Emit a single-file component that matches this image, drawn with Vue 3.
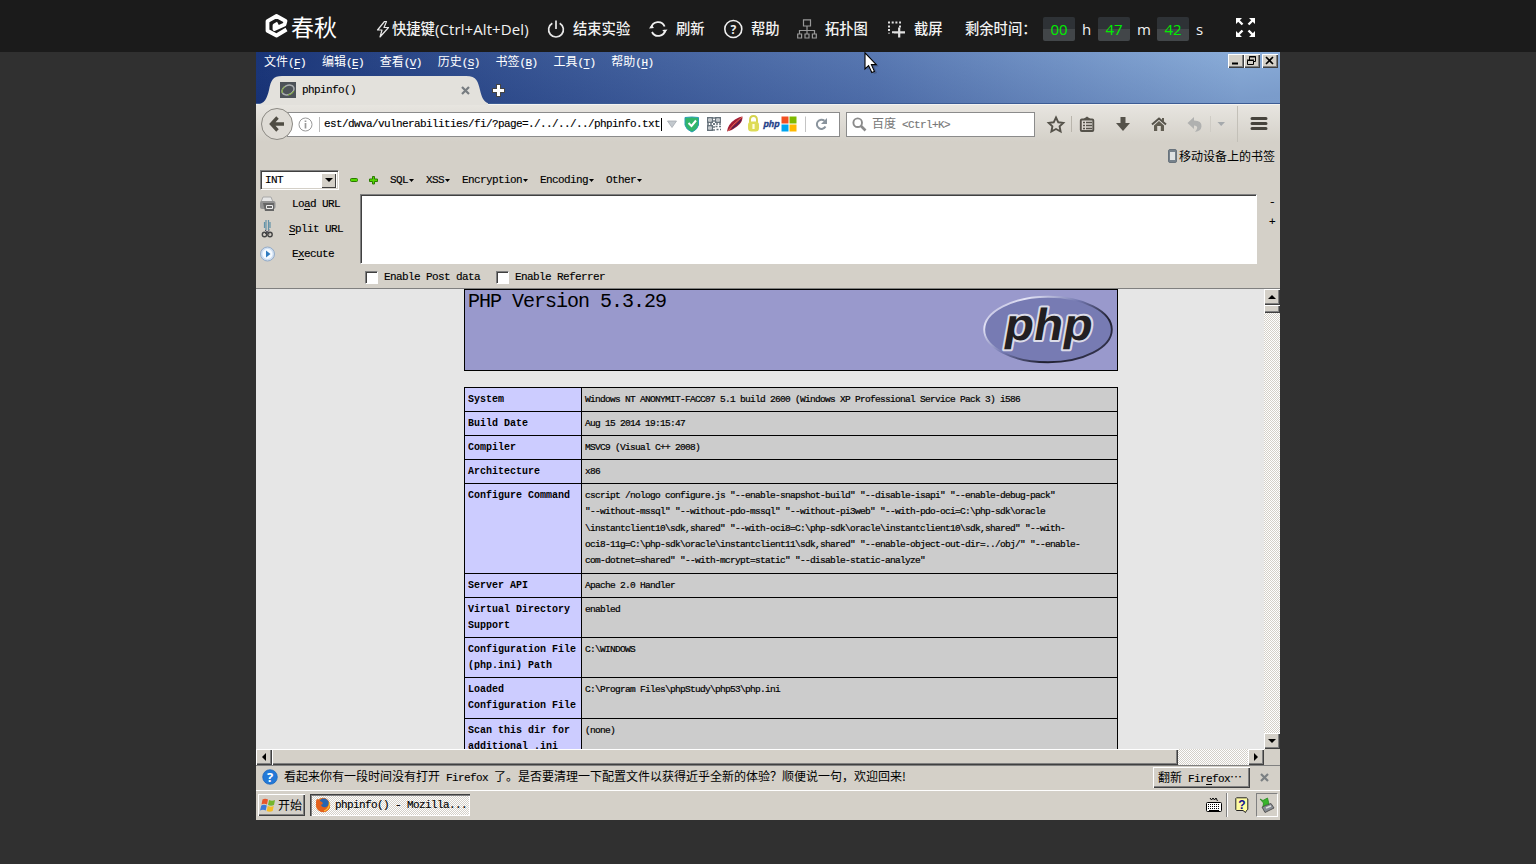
<script setup>
const menus = [
  ['文件', 'F'], ['编辑', 'E'], ['查看', 'V'], ['历史', 'S'],
  ['书签', 'B'], ['工具', 'T'], ['帮助', 'H'],
]
const rows = [
  { k: ['System'], v: ['Windows NT ANONYMIT-FACC07 5.1 build 2600 (Windows XP Professional Service Pack 3) i586'] },
  { k: ['Build Date'], v: ['Aug 15 2014 19:15:47'] },
  { k: ['Compiler'], v: ['MSVC9 (Visual C++ 2008)'] },
  { k: ['Architecture'], v: ['x86'] },
  {
    k: ['Configure Command'],
    v: [
      'cscript /nologo configure.js "--enable-snapshot-build" "--disable-isapi" "--enable-debug-pack"',
      '"--without-mssql" "--without-pdo-mssql" "--without-pi3web" "--with-pdo-oci=C:\\php-sdk\\oracle',
      '\\instantclient10\\sdk,shared" "--with-oci8=C:\\php-sdk\\oracle\\instantclient10\\sdk,shared" "--with-',
      'oci8-11g=C:\\php-sdk\\oracle\\instantclient11\\sdk,shared" "--enable-object-out-dir=../obj/" "--enable-',
      'com-dotnet=shared" "--with-mcrypt=static" "--disable-static-analyze"',
    ],
  },
  { k: ['Server API'], v: ['Apache 2.0 Handler'] },
  { k: ['Virtual Directory', 'Support'], v: ['enabled'] },
  { k: ['Configuration File', '(php.ini) Path'], v: ['C:\\WINDOWS'] },
  { k: ['Loaded', 'Configuration File'], v: ['C:\\Program Files\\phpStudy\\php53\\php.ini'] },
  { k: ['Scan this dir for', 'additional .ini'], v: ['(none)'] },
]
const hackMenus = ['SQL', 'XSS', 'Encryption', 'Encoding', 'Other']
</script>

<template>
  <div class="screen">
    <header class="topbar">
      <div class="logo">
        <svg width="24" height="26" viewBox="0 0 24 26" fill="none" stroke="#fff" stroke-width="3.800" stroke-linejoin="round">
          <path d="M22.500 16.500 L12.500 22.500 L3.500 17.800 V8.200 L12.500 3 L21.500 8 L20.500 11.500 L10.500 16 L10.500 12.500 L14 10.500" />
        </svg>
        <span>春秋</span>
      </div>
      <div class="tool t16">
        <svg width="16" height="20" viewBox="0 0 16 20" fill="none" stroke="#e8e8e8" stroke-width="1.2" stroke-linejoin="round"><path d="M8.500 2.500 L1.500 11 H6 L4 18 L12.500 8.500 H8 L10.500 2.500 Z" /></svg>
        <span>快捷键</span><span class="keys">(Ctrl+Alt+Del)</span>
      </div>
      <div class="tool t26">
        <svg width="18" height="20" viewBox="0 0 18 20" fill="none" stroke="#e8e8e8" stroke-width="1.7"><path d="M5.300 4.200 A7.400 7.400 0 1 0 12.700 4.200 M9 1.500 V10" /></svg>
        <span>结束实验</span>
      </div>
      <div class="tool t26">
        <svg width="19" height="20" viewBox="0 0 19 20" fill="none" stroke="#f0f0f0" stroke-width="1.8"><path d="M2.200 9 A7 7 0 0 1 15.600 7.500 M16.200 11 A7 7 0 0 1 3 13" /><path d="M0 9.500 L2.600 5.800 L5 9 Z M13.200 11 L18.500 10.500 L16 14 Z" fill="#f0f0f0" stroke="none" /></svg>
        <span>刷新</span>
      </div>
      <div class="tool t27">
        <svg width="19" height="20" viewBox="0 0 19 20"><circle cx="9.300" cy="10" r="8.500" fill="none" stroke="#f0f0f0" stroke-width="1.6" /><text x="9.300" y="14.500" text-anchor="middle" font-family="Noto Sans" font-weight="bold" font-size="12" fill="#f0f0f0">?</text></svg>
        <span>帮助</span>
      </div>
      <div class="tool t28">
        <svg width="20" height="20" viewBox="0 0 20 20" fill="none" stroke="#999" stroke-width="1.2"><path d="M6.500 .8 H13.500 V7 H6.500 Z M10 7 V15 M2.500 15 V11.500 H17.500 V15 M.7 15 H4.600 V19 H.7 Z M8 15 H12 V19 H8 Z M15.400 15 H19.300 V19 H15.400 Z" /></svg>
        <span>拓扑图</span>
      </div>
      <div class="tool t26">
        <svg width="18" height="20" viewBox="0 0 18 20" fill="none" stroke="#e0e0e0" stroke-width="2"><path d="M0 3.500 H13" stroke-dasharray="2 1.700" /><path d="M1 6.400 V14.500" stroke-dasharray="2 1.700" /><path d="M12 6.400 V8.400 M4 13.300 H6" /><path d="M11.200 8.500 V18.500 M6 13.300 H17" stroke-width="2.200" /></svg>
        <span>截屏</span>
      </div>
      <div class="tool">剩余时间：</div>
      <div class="time"><b>00</b><i>h</i></div>
      <div class="time"><b>47</b><i>m</i></div>
      <div class="time"><b>42</b><i>s</i></div>
      <svg class="full" width="20" height="20" viewBox="0 0 20 20" fill="#fff" stroke="#fff"><path d="M2 2 L6.500 6.500 M17 2 L12.500 6.500 M2 17 L6.500 12.500 M17 17 L12.500 12.500" stroke-width="2.400" /><path stroke="none" d="M0 0 H6 L0 6 Z M19 0 V6 L13 0 Z M0 19 V13 L6 19 Z M19 19 H13 L19 13 Z" /></svg>
    </header>

    <main class="desktop">
      <div class="title">
        <div class="menubar">
          <span v-for="m in menus" :key="m[1]" class="menu">{{ m[0] }}<span class="l">(<u>{{ m[1] }}</u>)</span></span>
          <div class="winbtns">
            <svg class="btn3" viewBox="0 0 16 14"><path d="M4 9.500 H10" stroke="#000" stroke-width="2" /></svg>
            <svg class="btn3" viewBox="0 0 16 14"><path d="M5.500 6 V2.500 H11.500 V7.500 H9.500 M5 3 H12 M3.500 6.500 H9.500 V10.500 H3.500 Z M3 6 H10" stroke="#000" fill="none" /></svg>
            <svg class="btn3 gap" viewBox="0 0 16 14"><path d="M4 3 L11 10 M11 3 L4 10" stroke="#000" stroke-width="1.6" /></svg>
          </div>
        </div>
        <div class="tabs">
          <div class="tab">
            <svg class="tabshape" width="232" height="29" viewBox="0 0 232 29"><path d="M0 29 C9 28 11 22 13 14 C15 4 17 0 26 0 H210 C221 0 222 6 224 14 C226 23 229 28 236 28 V29 Z" fill="#e3e1dc" /></svg>
            <svg class="fav" width="16" height="16" viewBox="0 0 16 16"><rect width="16" height="16" fill="#4d5258" /><ellipse cx="8" cy="8" rx="6.300" ry="4.500" fill="none" stroke="#a9adaf" stroke-width="1.5" transform="rotate(-25 8 8)" /><path d="M2 11 Q1.500 6 5 4.500 M8 13 Q12 12.500 14 9" stroke="#7fae2e" fill="none" /></svg>
            <span class="l tabname">phpinfo()</span>
            <svg class="tabx" width="9" height="9" viewBox="0 0 9 9"><path d="M1 1 L8 8 M8 1 L1 8" stroke="#777c80" stroke-width="2.2" /></svg>
          </div>
          <svg class="plus" width="13" height="13" viewBox="0 0 13 13"><path d="M6.500 0 V13 M0 6.500 H13" stroke="#454545" stroke-width="5" /><path d="M6.500 1 V12 M1 6.500 H12" stroke="#fff" stroke-width="3" /></svg>
        </div>
      </div>

      <div class="nav">
        <div class="back"><svg width="16" height="16" viewBox="0 0 16 16"><path d="M8.500 1.500 L2.500 8 L8.500 14.500 M3 8 H15" fill="none" stroke="#4f4c43" stroke-width="3.400" /></svg></div>
        <div class="url">
          <svg class="info" width="15" height="15" viewBox="0 0 15 15" fill="none" stroke="#999"><circle cx="7.500" cy="7.500" r="6.500" /><path d="M7.500 6 V11.500 M7.500 3.500 V5" stroke-width="1.700" /></svg>
          <i class="vl"></i>
          <span class="l addr">est/dwva/vulnerabilities/fi/?page=./../../../phpinfo.txt</span><i class="caret"></i>
          <svg class="urlicons" width="170" height="20" viewBox="0 0 170 20">
            <path d="M5.500 7 H14.500 L10 13.500 Z" fill="#c3c9ce" stroke="#a6abb1" stroke-width=".8" />
            <path d="M23 3.500 Q30 2.500 36.500 3.500 V11 Q35.500 15.500 30 18 Q24 15.500 23 11 Z" fill="#31b56a" stroke="#2a9eb4" /><path d="M26.500 9 L29.500 12 L34 6.500" stroke="#fff" stroke-width="2" fill="none" />
            <g fill="none" stroke="#66727b" stroke-width="1.400"><path d="M45.700 3.700 H50.300 V8.300 H45.700 Z M53.700 3.700 H58.300 V8.300 H53.700 Z M45.700 11.700 H50.300 V16.300 H45.700 Z M47.500 6 H48.500 M55.500 6 H56.500 M47.500 14 H48.500" /><path d="M52 3 V17 M45 10 H59" stroke-dasharray="2 1" /><path d="M53.500 12.500 H59 M54.500 15.500 H59" stroke-dasharray="2 1.500" /></g>
            <path d="M65 17.500 Q66 10 73 5.500 Q78 2.500 80.500 2.500 Q81 8 75 12.500 Q71 16 65 17.500" fill="#a21d36" /><path d="M66 17 Q71 10 80 3" stroke="#e06a54" fill="none" /><path d="M70 14.500 Q75 11 79 6" stroke="#51204f" stroke-width="1.500" fill="none" />
            <path d="M88 9 V6 Q88 2 91.500 2 Q95 2 95 6 V9" fill="none" stroke="#d5d34d" stroke-width="1.900" /><rect x="86" y="7.500" width="11" height="10" rx="3.500" fill="#dedc57" /><path d="M91.500 10 V15" stroke="#fffde0" stroke-width="2.200" />
            <text transform="translate(101 13) skewX(-12)" font-family="Liberation Sans" font-size="9.500" font-weight="700" fill="#1d3d87" stroke="#1d3d87" stroke-width=".4" textLength="16" lengthAdjust="spacingAndGlyphs">php</text>
            <path d="M119.500 2.500 H126.500 V9.500 H119.500Z" fill="#f25022" /><path d="M127.500 2.500 H134.500 V9.500 H127.500Z" fill="#7fba00" /><path d="M119.500 10.500 H126.500 V17.500 H119.500Z" fill="#00a4ef" /><path d="M127.500 10.500 H134.500 V17.500 H127.500Z" fill="#ffb900" />
            <path d="M143.500 2.500 V18" stroke="#c4c4c4" /><path d="M163.500 12.500 A4.600 4.600 0 1 1 162.500 6.800" fill="none" stroke="#8a949d" stroke-width="2" /><path d="M165 4 V10 H159 Z" fill="#8a949d" />
          </svg>
        </div>
        <div class="search">
          <svg width="15" height="15" viewBox="0 0 15 15" fill="none" stroke="#8b8b8b"><circle cx="5.700" cy="5.700" r="4.300" stroke-width="1.900" /><path d="M9 9 L13.500 13.500" stroke-width="2.600" /></svg>
          <span>百度<span class="l"> &lt;Ctrl+K&gt;</span></span>
        </div>
        <svg class="navicons" width="240" height="36" viewBox="0 0 240 36">
          <path d="M16 11.500 L18.300 16.300 L23.300 16.900 L19.600 20.400 L20.600 25.500 L16 23 L11.400 25.500 L12.400 20.400 L8.700 16.900 L13.700 16.300 Z" fill="none" stroke="#55524a" stroke-width="1.900" />
          <path d="M31.500 10 V26" stroke="#b9b5ac" />
          <rect x="40.800" y="13.500" width="12.500" height="11.500" rx="1" fill="none" stroke="#55524a" stroke-width="1.900" /><path d="M43.500 13 L47 10.500 L50.500 13Z" fill="#55524a" /><path d="M43 16.500 H45 M46 16.500 H52 M43 19.500 H45 M46 19.500 H52 M43 22.500 H45 M46 22.500 H52" stroke="#55524a" stroke-width="1.400" fill="none" />
          <path d="M80.500 11 H85.500 V17 H90 L83 25 L76 17 H80.500 Z" fill="#55524a" />
          <path d="M112 18.500 L119 12.500 L126 18.500" fill="none" stroke="#55524a" stroke-width="2" /><path d="M114 19.500 L119 15 L124 19.500 V25 H120.800 V20 H117.200 V25 H114 Z M122 12 H124 V16.500 L122 15Z" fill="#615d52" />
          <path d="M147.500 17 L154 11 V14.500 Q162 14.500 161.500 20.500 Q161 25 155 26 Q160 20 154 19.500 V23 Z" fill="#b0b1b0" />
          <path d="M170.500 10 V26" stroke="#cfccc5" /><path d="M177.500 16 H185 L181.200 20 Z" fill="#a5a9ac" />
          <path d="M197.500 0 V36" stroke="#c3c0b8" /><path d="M212 12.500 H226 M212 17.500 H226 M212 22.500 H226" stroke="#46433c" stroke-width="3" stroke-linecap="round" />
        </svg>
      </div>

      <div class="bookmarks">
        <svg width="9" height="14" viewBox="0 0 9 14"><rect x=".5" y=".5" width="8" height="13" rx="1.500" fill="#77828c" stroke="#69737c" /><path d="M2 3 H7 V11 H2Z" fill="#dfe2e3" /></svg>
        <span>移动设备上的书签</span>
      </div>

      <section class="hackbar">
        <div class="hackmenu">
          <div class="select l"><span>INT</span><i><svg width="8" height="4" viewBox="0 0 8 4"><path d="M0 0 H8 L4 4Z" /></svg></i></div>
          <svg width="30" height="10" viewBox="0 0 30 10" fill="#53d800" stroke="#2b7a00" stroke-width="1"><rect x="1.500" y="3.500" width="7" height="3" rx="1" /><path d="M23.500 1.500 H25.500 V4 H28.500 V6.500 H25.500 V9 H23.500 V6.500 H20.500 V4 H23.500Z" /></svg>
          <span v-for="m in hackMenus" :key="m" class="l hm">{{ m }}<svg width="5" height="3" viewBox="0 0 5 3"><path d="M0 0 H5 L2.500 3Z" /></svg></span>
        </div>
        <div class="hackbody">
          <div class="actions l">
            <div><svg width="16" height="16" viewBox="0 0 16 16"><path d="M3 1 H11 L13 6 H1 Z" fill="#e6e6e6" stroke="#a8a8a8" /><rect x="0" y="5" width="15.500" height="8" rx="2" fill="#929292" /><path d="M3 7 H14 V15 H5 Z" fill="#666" /><path d="M6.500 9.500 H12.500 V12.500 H6.500Z" fill="none" stroke="#eee" /></svg><span>Lo<u>a</u>d URL</span></div>
            <div><svg width="16" height="18" viewBox="0 0 16 18" fill="none"><path d="M6 0 V10 M8.500 0 V10 M4.500 2 V8 M10 2 V8" stroke="#6292a8" stroke-width="1.200" /><path d="M5 10 L9.500 14 M9.500 10 L5 14" stroke="#445" /><circle cx="4.500" cy="14.500" r="2.200" stroke="#444" stroke-width="1.400" /><circle cx="10" cy="14.500" r="2.200" stroke="#444" stroke-width="1.400" /></svg><span class="split"><u>S</u>plit URL</span></div>
            <div><svg width="16" height="16" viewBox="0 0 16 16"><circle cx="7.500" cy="8" r="7" fill="#cfdff2" stroke="#94abc7" /><circle cx="7.500" cy="8" r="5" fill="#f5faff" /><path d="M6 4.500 L10.500 8 L6 11.500Z" fill="#2f7bc0" /></svg><span>E<u>x</u>ecute</span></div>
          </div>
          <div class="textarea"></div>
          <div class="pm l"><span>-</span><span>+</span></div>
        </div>
        <div class="checks l"><i></i><span>Enable Post data</span><i></i><span>Enable Referrer</span></div>
      </section>

      <section class="viewport">
        <div class="page">
          <div class="phphead">
            <h1>PHP Version 5.3.29</h1>
            <svg width="132" height="72" viewBox="0 0 132 72">
              <defs>
                <linearGradient id="rim" x1="0" y1="0" x2="1" y2=".75"><stop offset="0" stop-color="#8c8cc0" /><stop offset=".22" stop-color="#e4e4f6" /><stop offset=".5" stop-color="#7378b0" /><stop offset=".78" stop-color="#202030" /><stop offset="1" stop-color="#34344f" /></linearGradient>
              </defs>
              <ellipse cx="66" cy="36.500" rx="63.800" ry="32.800" fill="#777bb3" stroke="url(#rim)" stroke-width="1.900" />
              <g transform="translate(20.500 46.500) skewX(-10)" font-family="Liberation Sans" font-weight="700" font-size="45" stroke-linejoin="round">
                <text textLength="88" lengthAdjust="spacingAndGlyphs" fill="#221f22" stroke="#dcdce8" stroke-width="4" paint-order="stroke">php</text>
              </g>
            </svg>
          </div>
          <div class="table">
            <div v-for="(r, i) in rows" :key="i" class="row">
              <div class="key"><div v-for="s in r.k" :key="s">{{ s }}</div></div>
              <div class="val"><div v-for="s in r.v" :key="s">{{ s }}</div></div>
            </div>
          </div>
        </div>
        <div class="vscroll">
          <div class="sb"><svg width="8" height="4" viewBox="0 0 8 4"><path d="M0 4 H8 L4 0Z" /></svg></div>
          <div class="sb thumb"></div>
          <div class="grow"></div>
          <div class="sb"><svg width="8" height="4" viewBox="0 0 8 4"><path d="M0 0 H8 L4 4Z" /></svg></div>
        </div>
      </section>
      <div class="hscroll">
        <div class="sb"><svg width="4" height="8" viewBox="0 0 4 8"><path d="M4 0 V8 L0 4Z" /></svg></div>
        <div class="sb hthumb"></div>
        <div class="grow"></div>
        <div class="sb"><svg width="4" height="8" viewBox="0 0 4 8"><path d="M0 0 V8 L4 4Z" /></svg></div>
        <div class="corner"></div>
      </div>

      <div class="notice">
        <svg width="16" height="16" viewBox="0 0 16 16"><circle cx="8" cy="8" r="7.300" fill="#2379d8" stroke="#1a63b8" stroke-width=".7" /><text x="8" y="12.500" text-anchor="middle" font-family="Open Sans" font-weight="bold" font-size="13" fill="#fff">?</text></svg>
        <span class="msg">看起来你有一段时间没有打开<span class="l"> Firefox </span>了。是否要清理一下配置文件以获得近乎全新的体验？顺便说一句，欢迎回来!</span>
        <div class="refresh">翻新<span class="l"> Fir<u>e</u>fox</span><span class="dots">⋯</span></div>
        <svg width="9" height="9" viewBox="0 0 9 9"><path d="M1 1 L8 8 M8 1 L1 8" stroke="#7b8083" stroke-width="2.200" /></svg>
      </div>

      <footer class="taskbar">
        <div class="start"><svg width="16" height="16" viewBox="0 0 16 16"><path d="M2.500 2.500 Q5 1 8 2.500 L7 7.500 Q4 6 1.500 7.500Z" fill="#e8562a" /><path d="M9 3 Q12 4.500 15 3 L14 8 Q11 9.500 8 8Z" fill="#74b52c" /><path d="M1.300 8.500 Q4 7 6.800 8.500 L5.700 13.500 Q3 12 0 13.500Z" fill="#3c78d8" /><path d="M7.700 9 Q11 10.500 13.700 9 L12.700 14 Q9.500 15.500 6.700 14Z" fill="#f5bc25" /></svg>开始</div>
        <div class="task"><svg width="16" height="16" viewBox="0 0 16 16"><circle cx="8" cy="8" r="7.200" fill="#e8701c" /><circle cx="8.800" cy="6.500" r="5" fill="#2765b0" /><path d="M1 5 Q1 2 3 2 Q4 4 7 5 Q9 7 6 8 Q7 11 11 10 Q14 9 14.500 5 Q17 13 9 15.300 Q1 15 1 5" fill="#e2601d" /><path d="M14.500 5 Q15 12 9 14" stroke="#fcc634" fill="none" stroke-width="1.200" /></svg><span class="l">phpinfo() - Mozilla...</span></div>
        <svg class="kbd" width="18" height="16" viewBox="0 0 18 16"><path d="M5 1 L6.500 3 L8 1 L9.500 3 L11 1 L12.500 4" stroke="#000" fill="none" /><rect x="1.500" y="5.500" width="15" height="9" rx="1" fill="#fff" stroke="#000" /><path d="M3 7.500 H15 M3 9.500 H15 M3 11.500 H15" stroke="#000" stroke-dasharray="1 1" /><path d="M4 13.500 H14" stroke="#000" /></svg>
        <i class="tsep"></i>
        <svg class="qm" width="14" height="16" viewBox="0 0 14 16"><path d="M1.500 .8 H11.500 L12.800 2 V12.500 L11.500 13.500 L10.500 15.500 L8 13.500 H1.500 L.8 12.500 V1.500Z" fill="#fffca0" stroke="#222" /><text x="7" y="11.500" text-anchor="middle" font-family="Liberation Sans" font-weight="bold" font-size="12" fill="#101090">?</text></svg>
        <div class="tray"><svg width="16" height="16" viewBox="0 0 16 16"><path d="M3 10 L12 6.500 L15 11 L6 15.500Z" fill="#888d94" stroke="#555" /><path d="M7 11 L12 9" stroke="#ddd" stroke-width="1.500" /><path d="M1 2 L4 3.500 L8.500 1 L10 7 L7 7.500 L4 9.500 L4.500 6Z" fill="#38b52b" stroke="#278a20" stroke-width=".8" /></svg></div>
      </footer>

      <svg class="cursor" width="18" height="24" viewBox="0 0 18 24"><path d="M3.500 4 V18 L7 15 L10 22 L13 21 L10 14.500 H15Z" fill="#223" opacity=".25" /><path d="M1 .8 V17 L4.600 13.600 L7.800 20.500 L10.400 19.400 L7.400 12.600 H12.300Z" fill="#fff" stroke="#000" stroke-width="1.100" /></svg>
    </main>
  </div>
</template>

<style>
html, body { margin: 0; background: #303030; overflow: hidden; }
</style>

<style scoped>
* { box-sizing: border-box; }
svg { flex: none; display: block; }
i, b { font-style: normal; font-weight: inherit; }
.screen { width: 1536px; height: 864px; background: #303030; overflow: hidden; }
.topbar {
  height: 52px; background: #1b1b1b; color: #f2f2f2; padding: 6px 0 0 264px;
  display: grid; grid-template-columns: 112px 171px 102px 75px 73px 91px 77px 78px 55px 59px 79px 40px;
  align-items: center; font: 500 14.300px/20px "Open Sans", "Noto Sans CJK SC", sans-serif;
}
.logo { display: flex; align-items: center; gap: 3px; font: 400 23px/30px "Noto Sans CJK SC", sans-serif; margin-top: -6px; color: #fff; white-space: nowrap; }
.tool { display: flex; align-items: center; white-space: nowrap; }
.keys { font-size: 15px; letter-spacing: .1px; }
.t26 svg, .t27 svg, .t28 svg { margin-right: 8px; }
.time { display: flex; align-items: center; gap: 7px; font-size: 15px; }
.time b { width: 32px; height: 24px; border-radius: 2px; background: linear-gradient(#2e3236 50%, #424649 50%); color: #00ee00; text-align: center; line-height: 25px; }
.full { margin-top: -3px; }

.desktop { position: relative; width: 1024px; height: 768px; margin-left: 256px; background: #d4d0c8; color: #000; font: 12px/16px "Noto Sans CJK SC", sans-serif; display: flex; flex-direction: column; overflow: hidden; }
.l { font-family: "Liberation Mono", "Noto Sans CJK SC", monospace; font-size: 11px; letter-spacing: -.6px; white-space: pre; -webkit-text-stroke: .15px; }
u { text-underline-offset: 2px; }
.title { height: 52px; flex: none; border-bottom: 1px solid #3c5c94; background: linear-gradient(174deg, rgba(166,202,240,.1) 15%, rgba(10,36,106,.28) 95%), linear-gradient(90deg, #0a246a, #5a7ab4 60%, #a6caf0 96%); }
.menubar { height: 18px; display: flex; padding-left: 8px; color: #fff; }
.menu { width: 57.900px; flex: none; white-space: nowrap; line-height: 17px; }
.winbtns { margin: 2px 0 0 auto; display: flex; padding-right: 2px; }
.btn3 { width: 16px; height: 14px; background: #d4d0c8; box-shadow: inset 1px 1px #fff, inset -1px -1px #404040, inset -2px -2px #808080; }
.gap { margin-left: 2px; }
.tabs { display: flex; padding-top: 6px; align-items: center; }
.tab { position: relative; width: 232px; height: 28px; display: flex; align-items: center; padding-left: 24px; }
.tabshape { position: absolute; left: 0; top: 0; }
.fav, .tabname, .tabx { position: relative; }
.tabname { margin-left: 6px; }
.tabx { margin-left: auto; margin-right: 18px; }
.plus { margin-left: 4px; }
.nav { height: 38px; flex: none; background: linear-gradient(#e7e5e0, #d4d0c8); border-top: 1px solid #f4f3f0; display: flex; align-items: center; padding: 1px 0 0 5px; }
.back { position: relative; z-index: 1; width: 32px; height: 32px; border: 1px solid #8b8983; border-radius: 50%; background: #dfdcd6; display: grid; place-items: center; flex: none; }
.url { margin-left: -6px; width: 553px; height: 25px; border: 1px solid #8b8b8b; background: #fff; display: flex; align-items: center; padding-left: 10px; flex: none; }
.vl { width: 1px; height: 15px; background: #bbb; margin: 0 4px 0 6px; }
.addr { width: 337px; }
.caret { width: 1px; height: 13px; background: #000; }
.search { margin-left: 6px; width: 189px; height: 25px; border: 1px solid #8b8b8b; background: #fff; color: #777; display: flex; align-items: center; gap: 5px; padding-left: 5px; flex: none; }
.navicons { margin-left: 5px; }
.bookmarks { height: 27px; flex: none; display: flex; justify-content: flex-end; align-items: center; gap: 2px; padding: 0 5px 0 0; }
.hackbar { height: 120px; flex: none; border-bottom: 1px solid #808080; }
.hackmenu { height: 25px; display: flex; align-items: center; padding: 0 0 3px 4px; }
.select { width: 79px; height: 20px; background: #fff; border: 1px solid #808080; border-right-color: #fff; border-bottom-color: #fff; box-shadow: inset 1px 1px #404040, inset -1px -1px #d4d0c8; display: flex; padding: 2px 2px 2px 4px; align-items: center; justify-content: space-between; margin-right: 10px; }
.select i { width: 15px; height: 15px; background: #d4d0c8; display: grid; place-items: center; box-shadow: inset 1px 1px #fff, inset -1px -1px #404040; }
.hm { display: flex; align-items: center; margin-left: 11px; }
.hm svg { margin-left: 1px; }
.hm + .hm { margin-left: 12px; }
.hackbody { display: flex; height: 70px; }
.actions { width: 104px; display: flex; flex-direction: column; gap: 9px; padding: 2px 0 0 4px; }
.actions div { display: flex; align-items: center; height: 16px; }
.actions span { margin-left: 16px; }
.actions .split { margin-left: 13px; }
.textarea { width: 897px; height: 70px; background: #fff; border: 1px solid #808080; border-right-color: #fff; border-bottom-color: #fff; box-shadow: inset 1px 1px #404040; }
.pm { display: flex; flex-direction: column; gap: 4px; padding-left: 12px; }
.checks { display: flex; align-items: center; height: 26px; padding-left: 109px; }
.checks i { width: 13px; height: 13px; background: #fff; border: 1px solid #808080; border-right-color: #fff; border-bottom-color: #fff; box-shadow: inset 1px 1px #404040; margin-right: 6px; }
.checks span { width: 112px; }
.viewport { height: 460px; flex: none; display: flex; background: #e6e6e6; overflow: hidden; }
.page { width: 1008px; padding-left: 208px; }
.phphead { width: 654px; height: 82px; border: 1px solid #000; background: #9999cc; display: flex; justify-content: space-between; padding: 0 3px 0 3px; }
h1 { margin: 1px 0 0; font: 400 20px/22px "Liberation Mono", monospace; letter-spacing: -1px; }
.phphead svg { margin-top: 3px; }
.table { margin-top: 16px; width: 654px; border: 1px solid #000; background: #000; display: grid; grid-template-rows: 23px 23px 23px 23px 89px 23px 39px 39px 40px 60px; row-gap: 1px; }
.row { display: grid; grid-template-columns: 116px 1fr; column-gap: 1px; white-space: pre; line-height: 16.250px; }
.key, .val { padding: 4px 3px 0; font-family: "Liberation Mono", monospace; }
.key { background: #ccccff; font-weight: 700; font-size: 10px; }
.val { background: #ccc; font-size: 9.500px; letter-spacing: -.7px; -webkit-text-stroke: .2px; }
.vscroll { width: 16px; display: flex; flex-direction: column; }
.sb { width: 16px; height: 16px; flex: none; background: #d4d0c8; box-shadow: inset 1px 1px #fff, inset -1px -1px #404040, inset -2px -2px #808080; display: grid; place-items: center; padding: 0 1px 1px 0; }
.thumb { height: 8px; }
.grow { flex: 1; background: repeating-conic-gradient(#d4d0c8 0 25%, #fff 0 50%) 0 0 / 2px 2px; }
.hscroll { height: 16px; flex: none; display: flex; }
.hthumb { width: 906px; }
.corner { width: 16px; background: #d4d0c8; }
.notice { height: 26px; flex: none; border-top: 1px solid #808080; border-bottom: 1px solid #fff; display: flex; align-items: center; padding: 0 11px 2px 6px; }
.msg { margin-left: 6px; white-space: nowrap; width: 869px; }
.refresh { width: 97px; height: 21px; background: #d4d0c8; box-shadow: inset 1px 1px #fff, inset -1px -1px #404040, inset -2px -2px #808080; line-height: 20px; padding-left: 5px; margin-right: 10px; white-space: nowrap; }
.dots { display: inline-block; width: 12px; }
.taskbar { height: 29px; flex: none; display: flex; align-items: center; padding: 0 2px 2px; }
.start { width: 47px; height: 22px; display: flex; align-items: center; gap: 2px; padding-left: 2px; white-space: nowrap; box-shadow: inset 1px 1px #fff, inset -1px -1px #404040, inset -2px -2px #808080; }
.task { margin-left: 5px; width: 160px; height: 22px; display: flex; align-items: center; gap: 4px; padding-left: 5px; background: repeating-conic-gradient(#d4d0c8 0 25%, #fff 0 50%) 0 0 / 2px 2px; box-shadow: inset 1px 1px #404040, inset 2px 2px #808080, inset -1px -1px #fff; }
.kbd { margin-left: auto; }
.tsep { width: 2px; height: 24px; background: linear-gradient(90deg, #808080 50%, #fff 50%); margin: 0 7px 0 3px; }
.tray { margin-left: 7px; width: 22px; height: 24px; display: grid; place-items: center; border: 1px solid #808080; border-right-color: #fff; border-bottom-color: #fff; }
.cursor { position: absolute; left: 608px; top: 0; }
</style>
